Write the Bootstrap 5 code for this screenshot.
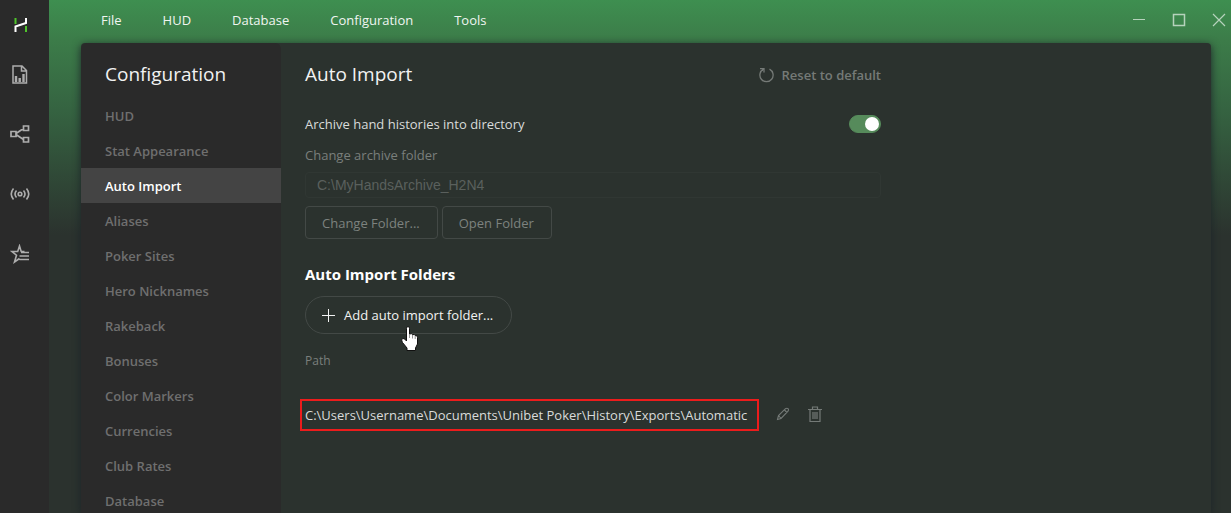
<!DOCTYPE html>
<html lang="en">
<head>
<meta charset="utf-8">
<meta name="viewport" content="width=device-width, initial-scale=1">
<title>Configuration</title>
<link href="https://cdn.jsdelivr.net/npm/bootstrap@5.3.0/dist/css/bootstrap.min.css" rel="stylesheet">
<style>
  body { font: 13px/20px "Open Sans", "Noto Sans", sans-serif; color: #d9dbda; background: #2b322e; }
  button, input { font: inherit; }
  svg { display: block; fill: none; stroke: currentColor; flex-shrink: 0; }
  .rail { width: 49px; background: #2a2a2a; color: #adadad; }
  .rail a { display: flex; justify-content: center; align-items: center; width: 40px; height: 60px; color: inherit; }
  .rail a:first-child { height: 50px; }
  .rail a:nth-child(2) { height: 48px; margin-bottom: 6px; }
  .workspace { min-width: 0; background: linear-gradient(#3e8f50, #3c7c49 40px, #356341 110px, #2b322e 235px); }
  .topbar { height: 43px; padding-left: 52px; }
  .topbar .menu { gap: 41px; height: 40px; }
  .topbar .menu a { color: #f0f5f1; text-decoration: none; }
  .winbtn { width: 40px; height: 40px; color: #b6d2bc; background: none; border: 0; padding: 0; display: flex; justify-content: center; align-items: center; }
  .winbtns { margin-right: -8px; }
  .pane { margin: 0 20px 0 32px; border-radius: 4px 4px 0 0; background: #2b322e; box-shadow: 0 2px 8px #1c2428; min-height: 0; }
  .side { width: 200px; background: #2a2a2a; flex-shrink: 0; }
  .pane-title { font-size: 19px; line-height: 28px; font-weight: 400; margin: 0; color: #f2f2f2; }
  .side .pane-title { padding: 17px 24px 10px; }
  .side a { display: block; padding: 8px 24px 7px; color: #6f6f6f; font-weight: 600; text-decoration: none; }
  .side a.current { background: #444; color: #fff; }
  .settings { max-width: 624px; padding: 17px 24px 0; }
  .dim { color: #7a7f7c; }
  .reset { background: none; border: 0; padding: 2px 0 0; font-weight: 600; color: #757a77; gap: 7px; }
  .switch-row { margin-top: 24px; height: 24px; }
  .form-switch .form-check-input { width: 32px; height: 18px; margin: 0; background-color: #568b5b; border-color: #568b5b; box-shadow: none;
    background-image: url("data:image/svg+xml,%3csvg xmlns='http://www.w3.org/2000/svg' viewBox='-8 -8 16 16'%3e%3ccircle r='7' fill='white'/%3e%3c/svg%3e"); }
  .archive-label { margin: 9px 0 7px; }
  .archive-path { height: 26px; padding: 0 11px; border: 1px solid #303733; border-radius: 4px; background: transparent; color: #5a605d; width: 100%; font-family: "Liberation Sans", sans-serif; font-size: 14px; }
  .folder-btn { height: 33px; padding: 0 17px 0 16px; border: 1px solid #434946; border-radius: 4px; background: none; color: #7d827f; }
  .section-title { font-size: 15px; line-height: 22px; font-weight: 700; color: #fff; margin: 24px 0 11px; }
  .add-btn { height: 38px; padding: 0 18px 0 16px; gap: 9px; border: 1px solid #434946; border-radius: 19px; background: none; color: #f2f2f2; }
  .pointer { position: absolute; left: 96px; top: 30px; }
  .paths { margin-top: 17px; border-collapse: collapse; }
  .paths th { font-size: 12px; font-weight: 400; padding: 0 0 28px; }
  .paths td { padding: 0; }
  .marked { border: 2px solid #ec1c1c; height: 32px; margin-left: -5px; padding: 0 10px 0 3px; line-height: 28px; white-space: nowrap; }
  .row-btn { background: none; border: 0; padding: 0 0 3px; width: 32px; height: 32px; color: #747a77; display: flex; align-items: center; justify-content: center; }
</style>
</head>
<body>
<div class="d-flex vh-100 overflow-hidden">
  <nav class="rail flex-shrink-0" aria-label="Modules">
    <a href="#" aria-label="Home"><svg width="16" height="16" viewBox="0 0 16 16" stroke-width="2"><path stroke="#4fc32b" d="M3.500 1v6M14 9v6"/><path stroke="#fff" d="M14 1v5L3.500 9.500V15"/></svg></a>
    <a href="#" aria-label="Reports"><svg width="16" height="19" viewBox="0 0 16 19" stroke-width="1.500"><path d="M1 1h9l4.500 4.500V18H1zM9.500 1v5h5"/><path d="M4 17v-6M7.700 17v-4M11.500 17V9" stroke-width="2.400"/></svg></a>
    <a href="#" aria-label="Share"><svg width="20" height="18" viewBox="0 0 20 18" stroke-width="1.700"><path d="M1 6.500h5v5H1zM13.500 1h5v4.500h-5zM13.500 12.500h5V17h-5zM6 8.500l7.500-5M6 9.500l7.500 5"/></svg></a>
    <a href="#" aria-label="Live"><svg width="20" height="14" viewBox="0 0 20 14" stroke-width="1.600"><circle cx="10" cy="7" r="1.800"/><path d="M6.500 3.500q-3 3.500 0 7M13.500 3.500q3 3.500 0 7M3.500 1.500q-4.500 5.500 0 11M16.500 1.500q4.500 5.500 0 11"/></svg></a>
    <a href="#" aria-label="Favourites"><svg width="20" height="20" viewBox="0 0 20 20" stroke-width="1.600"><path d="M14.500 7.500H11.200L9.500 2 7.700 7.500H2l4.500 3.700L4.500 18l5-3.500M11 8.500h8M9.500 12h9.500M9.500 15.500H19"/></svg></a>
  </nav>
  <div class="workspace d-flex flex-column flex-grow-1">
    <header class="topbar d-flex justify-content-between flex-shrink-0">
      <nav class="menu d-flex align-items-center" aria-label="Main menu">
        <a href="#">File</a><a href="#">HUD</a><a href="#">Database</a><a href="#">Configuration</a><a href="#">Tools</a>
      </nav>
      <div class="winbtns d-flex">
        <button class="winbtn" aria-label="Minimize"><svg width="14" height="14"><path d="M1 6.500h12"/></svg></button>
        <button class="winbtn" aria-label="Maximize"><svg width="14" height="14" stroke-width="1.500"><path d="M1.500 1.500h11v11h-11z"/></svg></button>
        <button class="winbtn" aria-label="Close"><svg width="14" height="14" stroke-width="1.200"><path d="M1 1l12 12M13 1L1 13"/></svg></button>
      </div>
    </header>
    <div class="pane d-flex flex-grow-1">
      <nav class="side overflow-hidden rounded-top" aria-label="Configuration sections">
        <h1 class="pane-title">Configuration</h1>
        <a href="#">HUD</a>
        <a href="#">Stat Appearance</a>
        <a href="#" class="current" aria-current="page">Auto Import</a>
        <a href="#">Aliases</a>
        <a href="#">Poker Sites</a>
        <a href="#">Hero Nicknames</a>
        <a href="#">Rakeback</a>
        <a href="#">Bonuses</a>
        <a href="#">Color Markers</a>
        <a href="#">Currencies</a>
        <a href="#">Club Rates</a>
        <a href="#">Database</a>
      </nav>
      <main class="settings flex-grow-1">
        <div class="d-flex justify-content-between align-items-center">
          <h2 class="pane-title">Auto Import</h2>
          <button class="reset d-flex align-items-center"><svg width="17" height="16" viewBox="0 0 17 16" stroke-width="1.300"><path d="M5.500 2.200A6.600 6.600 0 1 0 11.500 2.200M2 1.600h4v4"/></svg>Reset to default</button>
        </div>
        <div class="switch-row form-switch p-0 d-flex justify-content-between align-items-center">
          <label for="archive">Archive hand histories into directory</label>
          <input class="form-check-input" type="checkbox" role="switch" id="archive" checked>
        </div>
        <label class="archive-label dim d-block" for="archivePath">Change archive folder</label>
        <input class="archive-path d-block" id="archivePath" type="text" value="C:\MyHandsArchive_H2N4">
        <div class="d-flex gap-1 mt-2">
          <button class="folder-btn">Change Folder...</button>
          <button class="folder-btn">Open Folder</button>
        </div>
        <h3 class="section-title">Auto Import Folders</h3>
        <div class="position-relative d-inline-block">
          <button class="add-btn d-flex align-items-center"><svg width="13" height="13"><path d="M6.500 0v13M0 6.500h13"/></svg>Add auto import folder...</button>
          <svg class="pointer" width="18" height="26" viewBox="0 0 18 26"><path fill="#fff" stroke="#111" d="M5.500 14V2.500q0-2 1.500-2t1.500 2V8q2.500-1 3 .7 2.200-.8 2.700.9 2.300-.6 2.300 1.700V18l-2 4v2.500H6V22L1.500 16.500Q-.3 13 2 12.500q1.500-.3 3.500 2.500z"/><path stroke="#777" stroke-width=".8" d="M8.500 8v4M11.500 9v3.500M14.200 10v3"/></svg>
        </div>
        <table class="paths">
          <thead><tr><th class="dim" scope="col" colspan="2">Path</th></tr></thead>
          <tbody><tr>
            <td><div class="marked">C:\Users\Username\Documents\Unibet Poker\History\Exports\Automatic</div></td>
            <td><div class="d-flex ps-2">
              <button class="row-btn" aria-label="Edit"><svg width="14" height="14" viewBox="0 0 14 14" stroke-width="1.100"><path d="M1.500 12.500l1-4L9.500 1.700q1.500-1 2.500 0t0 2.500L5 11.500zM2.500 8.500L5 11.500M8.500 3l2.500 2.500"/></svg></button>
              <button class="row-btn" aria-label="Delete"><svg width="14" height="16" viewBox="0 0 14 16" stroke-width="1.200"><path d="M0 3.500h14M4.500 3.500V1h5v2.500M2 3.500v12h10v-12M5 6v7M7 6v7M9 6v7"/></svg></button>
            </div></td>
          </tr></tbody>
        </table>
      </main>
    </div>
  </div>
</div>
<script src="https://cdn.jsdelivr.net/npm/bootstrap@5.3.0/dist/js/bootstrap.bundle.min.js"></script>
</body>
</html>
